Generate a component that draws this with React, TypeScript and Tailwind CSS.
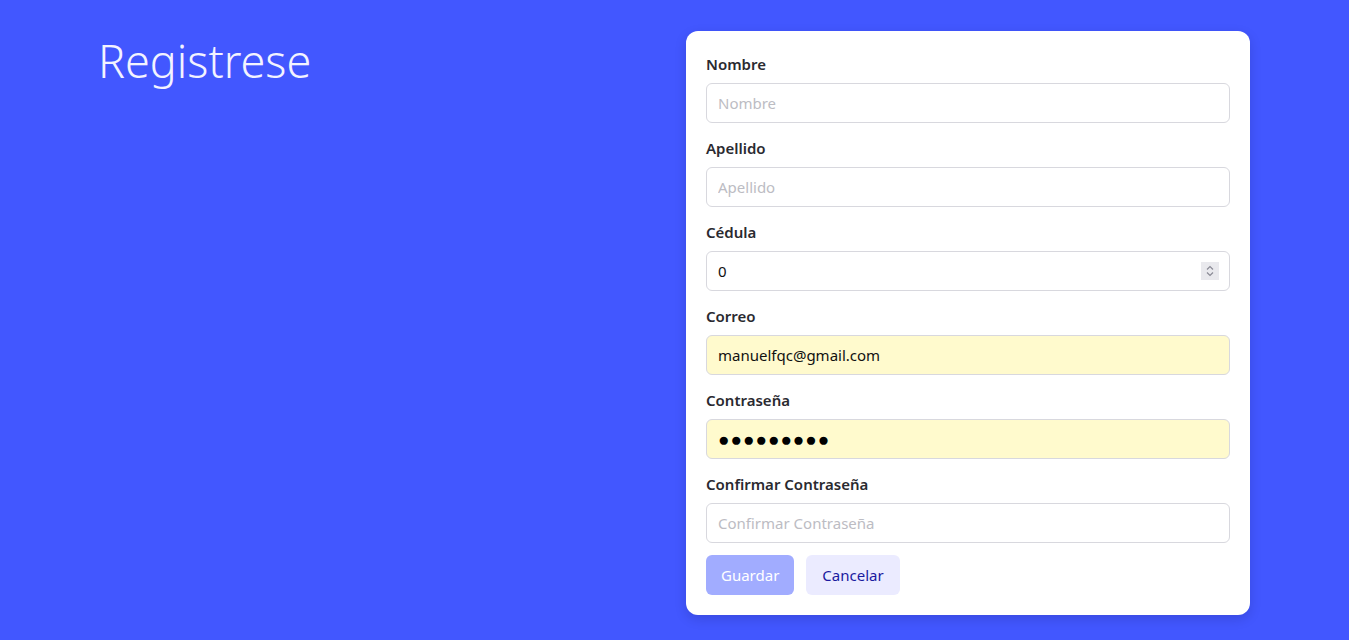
import React from "react";

const fields = [
  { label: "Nombre", placeholder: "Nombre", value: "" },
  { label: "Apellido", placeholder: "Apellido", value: "" },
  { label: "Cédula", placeholder: "", value: "0", number: true },
  { label: "Correo", placeholder: "Correo", value: "manuelfqc@gmail.com", autofill: true },
  { label: "Contraseña", placeholder: "Contraseña", value: "", autofill: true, password: true },
  { label: "Confirmar Contraseña", placeholder: "Confirmar Contraseña", value: "" },
];

export default function App() {
  return (
    <div
      className="min-h-[640px] w-full bg-[#4257ff] pl-[98px] pr-[99px] pt-[31px] pb-[25px]"
      style={{ fontFamily: '"Noto Sans", "Open Sans", sans-serif' }}
    >
      <div className="grid grid-cols-2 gap-6">
        <div>
          <h1 className="text-[45px] font-light leading-[60px] text-[#f3f3ff]">Registrese</h1>
        </div>
        <div className="rounded-xl bg-white px-5 pt-[22px] pb-5 shadow-[0_4px_12px_rgba(0,0,40,0.15)]">
          {fields.map((f, i) => (
            <div key={i} className="mb-[14px] flex flex-col">
              <label className="mb-2 text-[15px] font-semibold leading-[22px] text-[#2a2a30]">{f.label}</label>
              <div className="relative">
                {f.password ? (
                  <div className="flex h-10 items-center rounded-md border border-[#d8d8de] bg-[#fffacd] px-[11px] text-[19px] tracking-[1px] text-black">
                    ●●●●●●●●●
                  </div>
                ) : (
                  <input
                    readOnly
                    type="text"
                    value={f.value}
                    placeholder={f.placeholder}
                    className={`h-10 w-full rounded-md border border-[#d8d8de] px-[11px] text-[15px] text-[#111] outline-none placeholder:text-[#bcbcc3] ${f.autofill ? "bg-[#fffacd]" : "bg-white"}`}
                  />
                )}
                {f.number && (
                  <div className="absolute right-[11px] top-[11px] flex h-[18px] w-[18px] flex-col items-center justify-center bg-[#e9e9ed]">
                    <svg width="10" height="14" viewBox="0 0 10 14" fill="none" stroke="#8a8a95" strokeWidth="1.2">
                      <path d="M2 5.5 L5 2.5 L8 5.5" />
                      <path d="M2 8.5 L5 11.5 L8 8.5" />
                    </svg>
                  </div>
                )}
              </div>
            </div>
          ))}
          <div className="-mt-[2px] flex gap-3">
            <button className="h-10 rounded-md bg-[#a1acff] px-[15px] text-[15px] text-white">Guardar</button>
            <button className="h-10 rounded-md bg-[#ebebff] px-4 text-[15px] text-[#1a1aa0]">Cancelar</button>
          </div>
        </div>
      </div>
    </div>
  );
}
